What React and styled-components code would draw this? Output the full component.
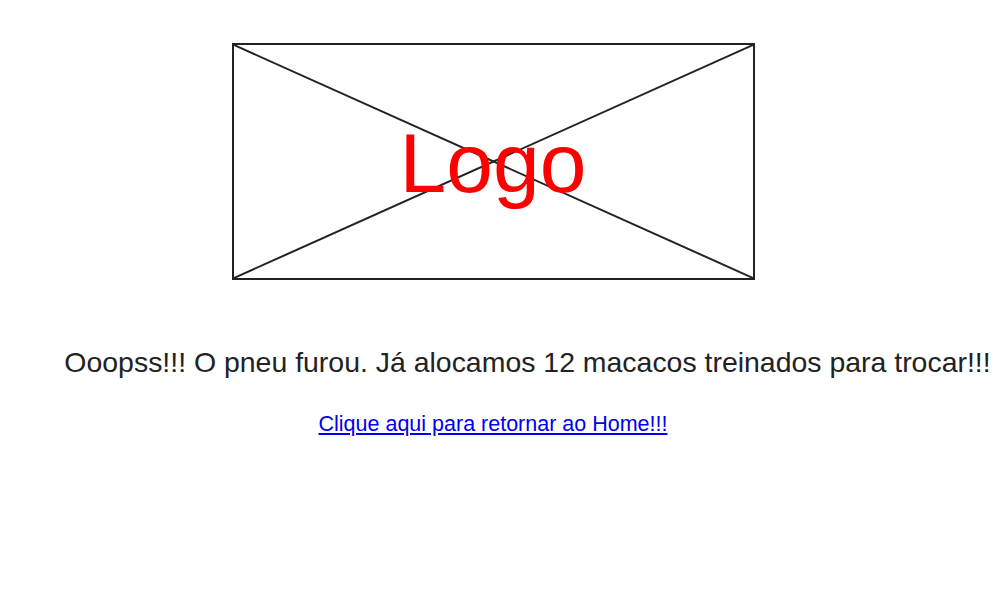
import React from 'react';
import styled, { createGlobalStyle } from 'styled-components';

const GlobalStyle = createGlobalStyle`
  body {
    margin: 0;
    background: #fff;
    font-family: 'Liberation Sans', Arial, sans-serif;
  }
`;

const Page = styled.div`
  display: flex;
  flex-direction: column;
  align-items: center;
  padding: 43px 14px 0 0;
`;

const LogoBox = styled.div`
  position: relative;
  width: 523px;
  height: 237px;
  box-sizing: border-box;
  border: 2px solid #222;
  display: flex;
  align-items: center;
  justify-content: center;
  padding-top: 3px;
`;

const Cross = styled.svg`
  position: absolute;
  inset: 0;
  width: 100%;
  height: 100%;
`;

const LogoText = styled.span`
  position: relative;
  color: #ff0000;
  font-size: 84px;
  line-height: normal;
`;

const Message = styled.h2`
  margin: 66px 0 0;
  padding-left: 69px;
  font-size: 28.45px;
  font-weight: normal;
  color: #222;
  white-space: nowrap;
  line-height: 33px;
`;

const HomeLink = styled.a`
  margin-top: 33px;
  font-size: 21.5px;
  line-height: 25px;
  color: #0000ee;
  text-decoration: underline;
  cursor: pointer;
`;

export default function App() {
  return (
    <>
      <GlobalStyle />
      <Page>
        <LogoBox>
          <Cross viewBox="0 0 519 233" preserveAspectRatio="none">
            <line x1="0" y1="0" x2="519" y2="233" stroke="#222" strokeWidth="2" />
            <line x1="519" y1="0" x2="0" y2="233" stroke="#222" strokeWidth="2" />
          </Cross>
          <LogoText>Logo</LogoText>
        </LogoBox>
        <Message>Ooopss!!! O pneu furou. Já alocamos 12 macacos treinados para trocar!!!</Message>
        <HomeLink href="#">Clique aqui para retornar ao Home!!!</HomeLink>
      </Page>
    </>
  );
}
